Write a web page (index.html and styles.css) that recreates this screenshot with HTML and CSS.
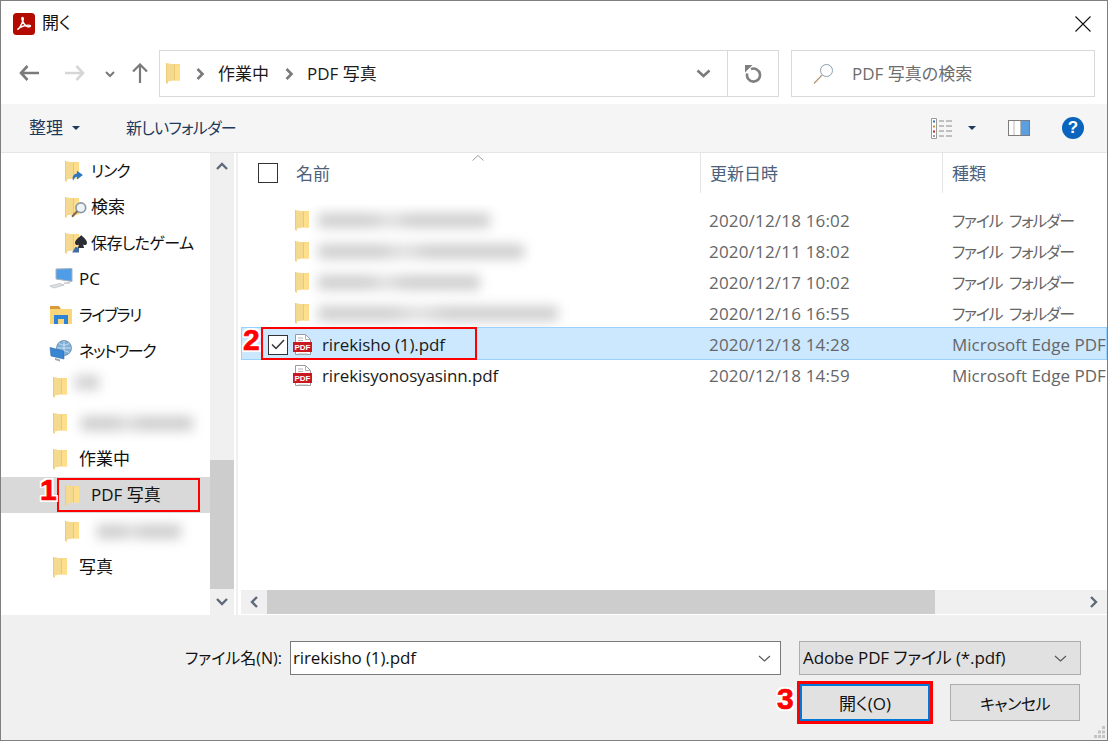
FILE: index.html
```html
<!doctype html>
<html lang="ja">
<head>
<meta charset="utf-8">
<title>開く</title>
<link rel="stylesheet" href="styles.css">
</head>
<body>
<svg class="defs" width="0" height="0">
	<symbol id="folder" viewBox="0 0 14 21">
		<path d="M4 1h10v16.500H4z" fill="#fbdb86"/>
		<path d="M8.500 2.500H14v15H8.500z" fill="#ffdf8c"/>
		<path d="M0 0l8.500 1.500v15.500l-6.500 1.500v2.500L0 20z" fill="#f5d98f"/>
		<path d="M8 1.500h.700V17H8z" fill="#e6bf63"/>
		<path d="M0 0h.700v20H0z" fill="#e8c470"/>
	</symbol>
	<symbol id="pdf-page" viewBox="0 0 20 22">
		<path d="M2.500.500h10l5 5v15h-15z" fill="#fff" stroke="#9a9a9a"/>
		<path d="M12.500.500v5h5M5 4h5M5 6.500h5M5 20h10" fill="none" stroke="#b4b4b4"/>
		<rect x="0" y="8" width="19" height="10" fill="#c9181e"/>
	</symbol>
</svg>

<div class="window">
	<header class="titlebar">
		<svg class="app-icon" width="22" height="22" viewBox="0 0 22 22">
			<rect width="22" height="22" rx="3.500" fill="#b30b00"/>
			<path d="M4.500 16.500c2-1 4-4.500 5.500-9 .4-1.500.4-3-.5-3s-.7 2 .3 4c1.200 2.500 3 4.700 5 5.200 1.500.4 3-.2 2.500-1-.5-.7-3.500-.5-6.500.2-2.500.6-4.800 1.800-6.300 3.600z" fill="none" stroke="#fff" stroke-width="1.500"/>
		</svg>
		<span class="title-text">開く</span>
		<svg class="close-icon" width="16" height="16" viewBox="0 0 16 16"><path d="M.500.500l15 15M15.500.500l-15 15" stroke="#111" stroke-width="1.100"/></svg>
	</header>

	<nav class="navbar">
		<svg class="nav-back" width="20" height="16" viewBox="0 0 20 16"><path d="M8.500 1L2 8l6.500 7M2 8h18" fill="none" stroke="#7a7a7a" stroke-width="2.600"/></svg>
		<svg class="nav-forward" width="20" height="16" viewBox="0 0 20 16"><path d="M11.500 1L18 8l-6.500 7M18 8H0" fill="none" stroke="#d6d6d6" stroke-width="2.600"/></svg>
		<svg class="nav-history" width="10" height="7" viewBox="0 0 10 7"><path d="M1 1l4 4 4-4" fill="none" stroke="#7a7a7a" stroke-width="2"/></svg>
		<svg class="nav-up" width="16" height="20" viewBox="0 0 16 20"><path d="M1 8.500L8 1.500l7 7M8 1.500V20" fill="none" stroke="#7a7a7a" stroke-width="2.200"/></svg>
		<div class="address">
			<svg class="address-folder"><use href="#folder"/></svg>
			<svg class="crumb-arrow" width="9" height="12" viewBox="0 0 9 12"><path d="M1.500 1l5 5-5 5" fill="none" stroke="#7a7a7a" stroke-width="2.600"/></svg>
			<span class="crumb">作業中</span>
			<svg class="crumb-arrow" width="9" height="12" viewBox="0 0 9 12"><path d="M1.500 1l5 5-5 5" fill="none" stroke="#7a7a7a" stroke-width="2.600"/></svg>
			<span class="crumb">PDF 写真</span>
			<svg class="address-drop" width="15" height="9" viewBox="0 0 15 9"><path d="M1.500 1.500l6 5.500 6-5.500" fill="none" stroke="#7a7a7a" stroke-width="2.500"/></svg>
			<div class="address-refresh">
				<svg width="17" height="18" viewBox="0 0 17 18"><path d="M6 4.100A6.500 6.500 0 1 1 2.200 8.500" fill="none" stroke="#7f7f7f" stroke-width="2.600"/><path d="M0 0h7.500L0 7.500z" fill="#7f7f7f"/></svg>
			</div>
		</div>
		<div class="search">
			<svg width="22" height="22" viewBox="0 0 22 22"><circle cx="13.500" cy="7.500" r="6" fill="none" stroke="#8a9fb0"/><path d="M9 12L1 20.500" stroke="#b79a78" stroke-width="1.300"/></svg>
			<span class="search-text">PDF 写真の検索</span>
		</div>
	</nav>

	<div class="toolbar">
		<span class="tool-btn">整理</span>
		<i class="caret-down caret-organize"></i>
		<span class="tool-btn tool-new kana">新しいフォルダー</span>
		<svg class="view-icon" width="22" height="21" viewBox="0 0 22 21">
			<path d="M.500.500h5v20h-5z" fill="#fff" stroke="#9a9a9a"/>
			<path d="M2 2.500h2v2H2z" fill="#3d6fb4"/><path d="M2 7.500h2v2H2z" fill="#c9962d"/><path d="M2 12.500h2v2H2z" fill="#c0271d"/><path d="M2 17h2v2H2z" fill="#9a9a9a"/>
			<path d="M8 3h5M15 3h6M8 8h5M15 8h6M8 13h5M15 13h6M8 18h5M15 18h6" stroke="#8a8a8a"/>
		</svg>
		<i class="caret-down caret-view"></i>
		<svg class="pane-icon" width="22" height="16" viewBox="0 0 22 16">
			<rect x=".500" y=".500" width="21" height="15" fill="#fff" stroke="#7c7c7c"/>
			<rect x="13" y="1" width="8" height="14" fill="#5b9fe0"/>
			<path d="M12.500 1v14M6 1v14" stroke="#b9b9b9"/>
		</svg>
		<span class="help">?</span>
	</div>

	<main class="main">
		<aside class="tree">
			<div class="tree-item level-2"><span class="folder-wrap"><svg class="tree-folder"><use href="#folder"/></svg><svg class="badge" width="13" height="15" viewBox="0 0 12 13"><path d="M2 12c-1.500-3 .5-6 3.500-6.500V3L11 7l-5.500 4V8.500C4 8.500 3 10 2 12z" fill="#2c76c4"/></svg></span><span class="kana">リンク</span></div>
			<div class="tree-item level-2"><span class="folder-wrap"><svg class="tree-folder"><use href="#folder"/></svg><svg class="badge" width="16" height="17" viewBox="0 0 13 14"><circle cx="8" cy="5.500" r="4" fill="#eef3f6" stroke="#8d9aa3" stroke-width="1.400"/><path d="M5 8.500L.800 13" stroke="#7e6a52" stroke-width="1.800"/></svg></span>検索</div>
			<div class="tree-item level-2"><span class="folder-wrap"><svg class="tree-folder"><use href="#folder"/></svg><svg class="badge" width="16" height="19" viewBox="0 0 14 16"><path d="M9 0c2 2 5 4 5 6.500 0 2-2 2.500-3.500 1.500l1 3H6l1-3C5.500 9 3.500 8.500 3.500 6.500 3.500 4 7 2 9 0z" fill="#2d2d35"/><path d="M1 15l3-5 3 1v4z" fill="#3f6da3"/></svg></span><span class="kana kana-loose">保存したゲーム</span></div>
			<div class="tree-item level-top">
				<svg class="root-icon" width="24" height="22" viewBox="0 0 24 22">
					<path d="M7 1l16-.500v13L7 11z" fill="#4e9de6" stroke="#a8b3bb"/>
					<path d="M15 14.500l6-.500v1.500l-6 .500z" fill="#c4c9cd"/>
					<path d="M1 18l10-2.500 4 1.500-10 3z" fill="#dfe3e6" stroke="#a8aeb3" stroke-width=".600"/>
				</svg>PC</div>
			<div class="tree-item level-top">
				<svg class="root-icon" width="24" height="20" viewBox="0 0 24 20">
					<path d="M1 1h9l2 3H1z" fill="#d89a3a"/>
					<path d="M1 4h22v15H1z" fill="#f9d67a"/>
					<path d="M5 10h14v9h-4v-5H9v5H5z" fill="#2f83d6"/>
				</svg><span class="kana kana-tight">ライブラリ</span></div>
			<div class="tree-item level-top">
				<svg class="root-icon" width="24" height="22" viewBox="0 0 24 22">
					<circle cx="15" cy="8" r="7.500" fill="#7fb0d8" stroke="#5c7f9e" stroke-width=".700"/>
					<path d="M8 8h14M15 1v14M10 3.500c3 2 7 2 10 0M10 12.500c3-2 7-2 10 0" fill="none" stroke="#e8f1f8" stroke-width=".700"/>
					<path d="M1 7.500L15 11v8L2 16z" fill="#3a86d4" stroke="#2c6ba9" stroke-width=".600"/>
					<path d="M6 18l5 1.500v2L6 20z" fill="#9eaab3"/>
				</svg><span class="kana kana-tight">ネットワーク</span></div>
			<div class="tree-item level-1"><svg class="tree-folder"><use href="#folder"/></svg><span class="smudge smudge-dot"></span></div>
			<div class="tree-item level-1"><svg class="tree-folder"><use href="#folder"/></svg><span class="smudge smudge-long"></span></div>
			<div class="tree-item level-1"><svg class="tree-folder"><use href="#folder"/></svg>作業中</div>
			<div class="tree-item level-2 is-current"><svg class="tree-folder"><use href="#folder"/></svg>PDF 写真</div>
			<div class="tree-item level-2"><svg class="tree-folder"><use href="#folder"/></svg><span class="smudge smudge-mid"></span></div>
			<div class="tree-item level-1"><svg class="tree-folder"><use href="#folder"/></svg>写真</div>
		</aside>

		<div class="vscroll">
			<div class="arrow-btn"><svg width="12" height="8" viewBox="0 0 12 8"><path d="M1 7l5-5 5 5" fill="none" stroke="#5f6b7a" stroke-width="2.400"/></svg></div>
			<div class="vscroll-track"><div class="vscroll-thumb"></div></div>
			<div class="arrow-btn"><svg width="12" height="8" viewBox="0 0 12 8"><path d="M1 1l5 5 5-5" fill="none" stroke="#5f6b7a" stroke-width="2.400"/></svg></div>
		</div>

		<div class="gutter"></div>

		<section class="files">
			<div class="file-head">
				<div class="cell-name head-name"><span class="checkbox"></span><span class="head-text">名前</span></div>
				<div class="cell-col"><span class="head-text">更新日時</span></div>
				<div class="cell-col"><span class="head-text">種類</span></div>
				<svg class="sort-caret" width="12" height="6" viewBox="0 0 12 6"><path d="M.500 5.500L6 .500l5.500 5" fill="none" stroke="#9a9a9a"/></svg>
			</div>
			<div class="file-rows">
				<div class="file-row"><div class="cell-name"><svg class="row-folder"><use href="#folder"/></svg><span class="smudge smudge-a"></span></div><div class="cell-date">2020/12/18 16:02</div><div class="cell-type kana">ファイル フォルダー</div></div>
				<div class="file-row"><div class="cell-name"><svg class="row-folder"><use href="#folder"/></svg><span class="smudge smudge-b"></span></div><div class="cell-date">2020/12/11 18:02</div><div class="cell-type kana">ファイル フォルダー</div></div>
				<div class="file-row"><div class="cell-name"><svg class="row-folder"><use href="#folder"/></svg><span class="smudge smudge-c"></span></div><div class="cell-date">2020/12/17 10:02</div><div class="cell-type kana">ファイル フォルダー</div></div>
				<div class="file-row"><div class="cell-name"><svg class="row-folder"><use href="#folder"/></svg><span class="smudge smudge-d"></span></div><div class="cell-date">2020/12/16 16:55</div><div class="cell-type kana">ファイル フォルダー</div></div>
				<div class="file-row is-selected">
					<div class="cell-name cell-checked"><span class="checkbox checkbox-row"><svg width="14" height="11" viewBox="0 0 14 11"><path d="M1 5.500l4 4 8-8.500" fill="none" stroke="#333" stroke-width="1.500"/></svg></span><svg class="row-pdf" viewBox="0 0 20 22"><use href="#pdf-page"/><text x="9.500" y="16" class="pdf-label">PDF</text></svg><span class="file-name">rirekisho (1).pdf</span></div>
					<div class="cell-date">2020/12/18 14:28</div><div class="cell-type">Microsoft Edge PDF</div>
				</div>
				<div class="file-row">
					<div class="cell-name"><svg class="row-pdf" viewBox="0 0 20 22"><use href="#pdf-page"/><text x="9.500" y="16" class="pdf-label">PDF</text></svg><span class="file-name">rirekisyonosyasinn.pdf</span></div>
					<div class="cell-date">2020/12/18 14:59</div><div class="cell-type">Microsoft Edge PDF</div>
				</div>
			</div>
			<div class="hscroll">
				<div class="h-arrow"><svg width="8" height="12" viewBox="0 0 8 12"><path d="M7 1L2 6l5 5" fill="none" stroke="#5f6b7a" stroke-width="2.400"/></svg></div>
				<div class="hscroll-thumb"></div>
				<div class="h-arrow h-arrow-end"><svg width="8" height="12" viewBox="0 0 8 12"><path d="M1 1l5 5-5 5" fill="none" stroke="#5f6b7a" stroke-width="2.400"/></svg></div>
			</div>
		</section>
	</main>

	<footer class="footer">
		<div class="footer-row">
			<label class="file-label" for="fileName">ファイル名(N):</label>
			<div class="file-input">
				<input id="fileName" value="rirekisho (1).pdf">
				<svg width="13" height="7" viewBox="0 0 13 7"><path d="M1 1l5.500 5L12 1" fill="none" stroke="#555" stroke-width="1.100"/></svg>
			</div>
			<div class="file-type">
				<span>Adobe PDF ファイル (*.pdf)</span>
				<svg width="13" height="7" viewBox="0 0 13 7"><path d="M1 1l5.500 5L12 1" fill="none" stroke="#555" stroke-width="1.100"/></svg>
			</div>
		</div>
		<div class="footer-row footer-buttons">
			<button class="btn btn-primary">開く(O)</button>
			<button class="btn btn-cancel">キャンセル</button>
		</div>
		<svg class="grip" width="13" height="13" viewBox="0 0 13 13"><path d="M9 0h3v3H9zM5 4.500h3v3H5zM9 4.500h3v3H9zM1 9h3v3H1zM5 9h3v3H5zM9 9h3v3H9z" fill="#c4c4c4"/></svg>
	</footer>

	<div class="mark mark-tree"></div>
	<div class="mark mark-file"></div>
	<div class="mark mark-open"></div>
	<span class="step step-1">1</span>
	<span class="step step-2">2</span>
	<span class="step step-3">3</span>
</div>
</body>
</html>
```

FILE: styles.css
```css
html,body{
	margin:0;
	height:100%;
	overflow:hidden;
	background:#fff;
}

body{
	font-family:"Open Sans","Noto Sans CJK JP",sans-serif;
	font-size:17px;
	line-height:22px;
	font-feature-settings:"palt";
	color:#1a1a1a;
}

.defs{
	position:absolute;
}

/* katakana runs in the original font are narrower than the kanji */
.kana{
	font-size:16px;
	letter-spacing:-1px;
}

.kana-loose{
	letter-spacing:-.6px;
}

.kana-tight{
	letter-spacing:-1.4px;
}

.pdf-label{
	font-family:"Liberation Sans",sans-serif;
	font-size:8px;
	font-weight:bold;
	letter-spacing:0;
	fill:#fff;
	text-anchor:middle;
}

.window{
	position:relative;
	box-sizing:border-box;
	width:1108px;
	height:741px;
	border:1px solid #7f7f7f;
	display:flex;
	flex-direction:column;
	overflow:hidden;
}

/* title bar */
.titlebar{
	height:46px;
	flex:none;
	display:flex;
	align-items:center;
	padding-left:12px;
}

.title-text{
	margin-left:7px;
	margin-top:-2px;
	color:#111;
}

.close-icon{
	margin-left:auto;
	margin-right:16px;
}

/* back / forward / address */
.navbar{
	height:57px;
	flex:none;
	display:flex;
	align-items:flex-start;
}

.navbar > svg{
	margin-top:18px;
}

.nav-back{
	margin-left:18px;
}

.nav-forward{
	margin-left:26px;
}

.navbar > .nav-history{
	margin-top:24px;
	margin-left:20px;
}

.navbar > .nav-up{
	margin-left:17px;
	margin-top:16px;
}

.address{
	box-sizing:border-box;
	width:620px;
	height:47px;
	margin:3px 0 0 11px;
	border:1px solid #d9d9d9;
	display:flex;
	align-items:center;
}

.address-folder{
	width:14px;
	height:21px;
	margin-left:6px;
}

.crumb-arrow{
	margin-left:16px;
}

.crumb{
	margin-left:13px;
}

.address-drop{
	margin-left:auto;
	margin-right:16px;
}

.address-refresh{
	width:50px;
	height:100%;
	border-left:1px solid #d9d9d9;
	display:flex;
	align-items:center;
	justify-content:center;
}

.search{
	box-sizing:border-box;
	width:304px;
	height:47px;
	margin:3px 0 0 12px;
	border:1px solid #d9d9d9;
	display:flex;
	align-items:center;
	padding-left:21px;
	color:#6d6d6d;
}

.search-text{
	margin-left:17px;
}

/* command bar */
.toolbar{
	box-sizing:border-box;
	height:49px;
	flex:none;
	display:flex;
	align-items:center;
	background:#f5f5f5;
	border-bottom:1px solid #e6e6e6;
	padding-left:28px;
	color:#1e395b;
}

.caret-down{
	width:0;
	height:0;
	border-left:4px solid transparent;
	border-right:4px solid transparent;
	border-top:4px solid #1e395b;
}

.caret-organize{
	margin-left:9px;
}

.tool-new{
	margin-left:46px;
	letter-spacing:-.75px;
}

.view-icon{
	margin-left:auto;
}

.caret-view{
	margin-left:15px;
}

.pane-icon{
	margin-left:32px;
}

.help{
	width:22px;
	height:22px;
	margin:0 23px 0 32px;
	border-radius:50%;
	background:#0a63bd;
	color:#fff;
	font:bold 17px/22px "Liberation Sans",sans-serif;
	text-align:center;
}

/* middle part */
.main{
	height:462px;
	flex:none;
	display:flex;
}

.tree{
	width:209px;
	flex:none;
	overflow:hidden;
}

.tree-item{
	height:36px;
	display:flex;
	align-items:center;
	white-space:nowrap;
	color:#111;
}

.level-top{
	padding-left:48px;
}

.level-1{
	padding-left:52px;
}

.level-2{
	padding-left:64px;
}

.is-current{
	background:#d9d9d9;
}

.tree-folder{
	width:14px;
	height:21px;
	flex:none;
	margin-right:12px;
}

.folder-wrap{
	position:relative;
	display:flex;
}

.folder-wrap .badge{
	position:absolute;
	left:6px;
	bottom:0;
}

.root-icon{
	width:24px;
	flex:none;
	margin-right:6px;
}

.smudge{
	display:block;
	height:15px;
	background:linear-gradient(to right,#cfcfcf 30%,#e2e2e2 42%,#cfcfcf 54%);
	filter:blur(6px);
}

.smudge-dot{
	width:24px;
	margin-left:-4px;
	margin-top:-10px;
}

.smudge-long{
	width:112px;
	margin-left:2px;
}

.smudge-mid{
	width:84px;
	margin-left:6px;
}

.smudge-a{
	width:172px;
	margin-left:9px;
}

.smudge-b{
	width:206px;
	margin-left:9px;
}

.smudge-c{
	width:162px;
	margin-left:9px;
}

.smudge-d{
	width:240px;
	margin-left:9px;
}

.vscroll{
	width:24px;
	flex:none;
	display:flex;
	flex-direction:column;
	background:#f0f0f0;
}

.arrow-btn{
	height:26px;
	flex:none;
	display:flex;
	align-items:center;
	justify-content:center;
}

.vscroll-track{
	flex:1;
	display:flex;
	align-items:flex-end;
}

.vscroll-thumb{
	width:100%;
	height:129px;
	background:#cdcdcd;
}

.gutter{
	width:7px;
	flex:none;
	box-sizing:border-box;
	border-left:2px solid #fff;
	background:linear-gradient(to right,#f0f0f0 2px,#fff 2px);
}

.files{
	flex:1;
	min-width:0;
	display:flex;
	flex-direction:column;
}

.file-head,.file-row{
	display:grid;
	grid-template-columns:459px 242px 1fr;
}

.file-head{
	position:relative;
	height:40px;
	margin-bottom:12px;
	color:#4c607a;
	align-items:stretch;
}

.head-name{
	padding-left:17px;
}

.head-text{
	margin-top:2px;
}

.cell-name{
	display:flex;
	align-items:center;
}

.cell-col{
	box-sizing:border-box;
	border-left:1px solid #e5e5e5;
	padding-left:9px;
	display:flex;
	align-items:center;
}

.checkbox{
	box-sizing:border-box;
	width:20px;
	height:20px;
	flex:none;
	border:1px solid #333;
	margin-right:18px;
	display:flex;
	align-items:center;
	justify-content:center;
}

.checkbox-row{
	margin-right:5px;
	background:#fff;
}

.sort-caret{
	position:absolute;
	left:231px;
	top:2px;
}

.file-rows{
	flex:1;
	overflow:hidden;
}

.file-row{
	height:31px;
	white-space:nowrap;
	color:#666;
}

.file-row .cell-name{
	padding-left:52px;
	color:#1a1a1a;
}

.file-row .cell-checked{
	padding-left:27px;
}

.is-selected{
	box-sizing:border-box;
	height:33px;
	margin-top:-2px;
	padding-top:2px;
	background:#cce8ff;
	box-shadow:inset 0 0 0 1px #99d1ff;
	position:relative;
}

.row-folder{
	width:14px;
	height:21px;
	flex:none;
	margin-left:2px;
}

.row-pdf{
	width:20px;
	height:22px;
	flex:none;
}

.file-name{
	margin-left:9px;
	letter-spacing:-.12px;
}

.cell-date{
	padding-left:9px;
	align-self:center;
	letter-spacing:.18px;
}

.cell-type{
	padding-left:10px;
	align-self:center;
	overflow:hidden;
}

.cell-type.kana{
	letter-spacing:-1.3px;
	word-spacing:4px;
}

.hscroll{
	height:24px;
	flex:none;
	margin-bottom:1px;
	display:flex;
	background:#f0f0f0;
}

.h-arrow{
	width:26px;
	flex:none;
	display:flex;
	align-items:center;
	justify-content:center;
}

.hscroll-thumb{
	width:668px;
	background:#cdcdcd;
}

.h-arrow-end{
	margin-left:auto;
}

/* bottom part */
.footer{
	position:relative;
	flex:1;
	background:#f0f0f0;
	padding-top:26px;
}

.footer-row{
	display:flex;
	align-items:center;
	justify-content:flex-end;
	padding-right:26px;
}

.file-label{
	margin-right:8px;
	font-size:16px;
	color:#111;
}

.file-input{
	box-sizing:border-box;
	width:491px;
	height:34px;
	border:1px solid #7a7a7a;
	background:#fff;
	display:flex;
	align-items:center;
	padding-right:9px;
}

.file-input input{
	flex:1;
	min-width:0;
	border:0;
	outline:0;
	padding:0 0 0 2px;
	font:inherit;
	font-feature-settings:inherit;
	letter-spacing:-.12px;
	color:#111;
}

.file-type{
	box-sizing:border-box;
	width:282px;
	height:34px;
	margin-left:18px;
	border:1px solid #adadad;
	background:#e1e1e1;
	display:flex;
	align-items:center;
	justify-content:space-between;
	padding:0 13px 0 3px;
	letter-spacing:-.12px;
	color:#111;
}

.footer-buttons{
	margin-top:9px;
	padding-right:27px;
	gap:20px;
}

.btn{
	box-sizing:border-box;
	width:130px;
	height:37px;
	border:1px solid #adadad;
	background:#e1e1e1;
	font:inherit;
	font-feature-settings:inherit;
	color:#111;
	padding:2px 0 0;
}

.btn-primary{
	border:2px solid #0078d7;
}

.btn-cancel{
	font-size:16px;
	letter-spacing:-.5px;
}

.grip{
	position:absolute;
	right:1px;
	bottom:1px;
}

/* red marks laid over the dialog */
.mark{
	position:absolute;
	box-sizing:border-box;
	border:2px solid #f00;
}

.mark-tree{
	left:56px;
	top:477px;
	width:143px;
	height:34px;
}

.mark-file{
	left:260px;
	top:326px;
	width:216px;
	height:33px;
}

.mark-open{
	left:796px;
	top:680px;
	width:136px;
	height:43px;
	border-width:3px;
}

.step{
	position:absolute;
	font:bold 30px/30px "Liberation Sans",sans-serif;
	color:#f00;
	-webkit-text-stroke:.7px #f00;
	text-shadow:2px 0 #fff,-2px 0 #fff,0 2px #fff,0 -2px #fff,2px 2px #fff,-2px 2px #fff,2px -2px #fff,-2px -2px #fff;
}

.step-1{
	left:39px;
	top:474px;
}

.step-2{
	left:242px;
	top:324px;
}

.step-3{
	left:776px;
	top:683px;
}
```
